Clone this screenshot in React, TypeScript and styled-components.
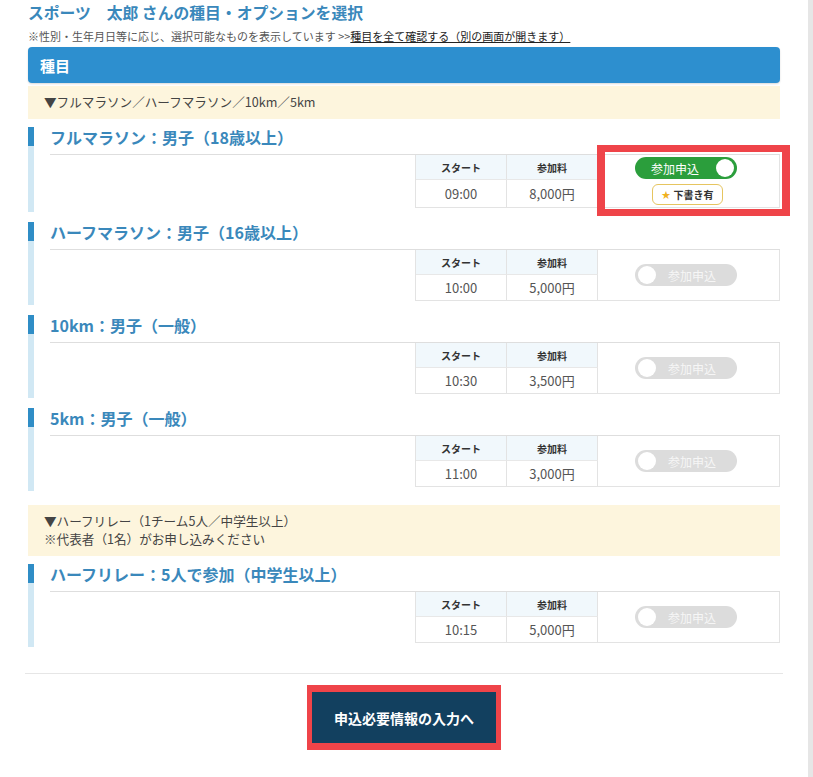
import React from 'react'
import styled, { createGlobalStyle } from 'styled-components'

const GlobalStyle = createGlobalStyle`
  * { box-sizing: border-box; }
  body {
    margin: 0;
    background: #fff;
    font-family: "Noto Sans CJK JP", "Noto Sans", sans-serif;
    color: #333;
  }
`

type Entry = {
  title: string
  start: string
  fee: string
  on?: boolean
  draft?: boolean
}

type Group = {
  band: string[]
  entries: Entry[]
}

const groups: Group[] = [
  {
    band: ['▼フルマラソン／ハーフマラソン／10km／5km'],
    entries: [
      { title: 'フルマラソン：男子（18歳以上）', start: '09:00', fee: '8,000円', on: true, draft: true },
      { title: 'ハーフマラソン：男子（16歳以上）', start: '10:00', fee: '5,000円' },
      { title: '10km：男子（一般）', start: '10:30', fee: '3,500円' },
      { title: '5km：男子（一般）', start: '11:00', fee: '3,000円' },
    ],
  },
  {
    band: ['▼ハーフリレー（1チーム5人／中学生以上）', '※代表者（1名）がお申し込みください'],
    entries: [{ title: 'ハーフリレー：5人で参加（中学生以上）', start: '10:15', fee: '5,000円' }],
  },
]

export default function App() {
  return (
    <>
      <GlobalStyle />
      <Page>
        <PageTitle>スポーツ　太郎 さんの種目・オプションを選択</PageTitle>
        <Note>
          ※性別・生年月日等に応じ、選択可能なものを表示しています &gt;&gt;
          <a href="#">種目を全て確認する（別の画面が開きます）</a>
        </Note>
        <SectionBar>種目</SectionBar>
        {groups.map((g, gi) => (
          <GroupBlock key={gi} $first={gi === 0}>
            <Band>
              {g.band.map((line) => (
                <BandLine key={line}>{line}</BandLine>
              ))}
            </Band>
            {g.entries.map((e, i) => (
              <Item key={e.title} $first={i === 0}>
                <Accent />
                <ItemBody>
                  <ItemTitle>{e.title}</ItemTitle>
                  <Table>
                    <HeadCell>スタート</HeadCell>
                    <HeadCell>参加料</HeadCell>
                    <ToggleCell>
                      <Toggle $on={!!e.on}>
                        <Knob $on={!!e.on} />
                        <span>参加申込</span>
                      </Toggle>
                      {e.draft && (
                        <Draft>
                          <Star>★</Star>下書き有
                        </Draft>
                      )}
                      {e.on && <Highlight />}
                    </ToggleCell>
                    <DataCell>{e.start}</DataCell>
                    <DataCell>{e.fee}</DataCell>
                  </Table>
                </ItemBody>
              </Item>
            ))}
          </GroupBlock>
        ))}
        <Divider />
        <Footer>
          <NextButton>申込必要情報の入力へ</NextButton>
        </Footer>
      </Page>
    </>
  )
}

const Page = styled.div`
  width: 813px;
  min-height: 100vh;
  padding: 3px 28px 0;
  border-right: 5px solid #e6e6e6;
`

const PageTitle = styled.h1`
  margin: 0;
  font-size: 15.8px;
  line-height: 20px;
  font-weight: 700;
  color: #3a88bb;
`

const Note = styled.p`
  margin: 6px 0 0;
  font-size: 11px;
  line-height: 14px;
  color: #555;
  a {
    color: #222;
    text-decoration: underline;
  }
`

const SectionBar = styled.div`
  margin-top: 4px;
  height: 36px;
  padding-left: 12px;
  display: flex;
  align-items: center;
  background: #2d8fcf;
  border-radius: 4px;
  color: #fff;
  font-size: 15px;
  font-weight: 700;
  box-shadow: 0 1px 2px rgba(0, 0, 0, 0.15);
`

const GroupBlock = styled.div<{ $first: boolean }>`
  margin-top: ${(p) => (p.$first ? '3px' : '14px')};
`

const Band = styled.div`
  padding: 7px 16px 8px;
  background: #fdf5dd;
  color: #444;
`

const BandLine = styled.div`
  height: 18px;
  font-size: 12.6px;
  line-height: 18px;
`

const Item = styled.div<{ $first: boolean }>`
  display: flex;
  gap: 16px;
  margin-top: ${(p) => (p.$first ? '8px' : '10px')};
`

const Accent = styled.div`
  width: 6px;
  flex: none;
  background: linear-gradient(#2f8dc6 0 19px, #d1e8f4 19px);
`

const ItemBody = styled.div`
  flex: 1;
  padding-bottom: 4px;
`

const ItemTitle = styled.h2`
  margin: 0;
  padding-bottom: 7px;
  font-size: 16px;
  line-height: 20px;
  font-weight: 700;
  color: #3a88bb;
  border-bottom: 1px solid #dedede;
`

const Table = styled.div`
  margin-left: auto;
  width: 365px;
  display: grid;
  grid-template-columns: 91px 91px 183px;
  grid-template-rows: 25px minmax(25px, auto);
  border-left: 1px solid #e3e3e3;
  border-right: 1px solid #e3e3e3;
  border-bottom: 1px solid #e3e3e3;
`

const HeadCell = styled.div`
  display: flex;
  align-items: center;
  justify-content: center;
  background: #f1f8fc;
  border-right: 1px solid #e3e3e3;
  border-bottom: 1px solid #e8e8e8;
  font-size: 10px;
  font-weight: 700;
  color: #333;
`

const DataCell = styled.div`
  display: flex;
  align-items: center;
  justify-content: center;
  border-right: 1px solid #e3e3e3;
  font-size: 13px;
  color: #555;
`

const ToggleCell = styled.div`
  position: relative;
  grid-column: 3;
  grid-row: 1 / span 2;
  display: flex;
  flex-direction: column;
  align-items: center;
  justify-content: center;
  gap: 5px;
  padding: 2px 0 2px;
`

const Toggle = styled.div<{ $on: boolean }>`
  position: relative;
  width: 102px;
  height: 22px;
  margin-right: 7px;
  border-radius: 11px;
  display: flex;
  align-items: center;
  justify-content: center;
  padding: ${(p) => (p.$on ? '0 22px 0 0' : '0 0 0 12px')};
  background: ${(p) => (p.$on ? '#2b9e3c' : '#dcdcdc')};
  color: ${(p) => (p.$on ? '#fff' : '#f6f6f6')};
  font-size: 12px;
`

const Knob = styled.span<{ $on: boolean }>`
  position: absolute;
  top: 2px;
  ${(p) => (p.$on ? 'right: 3px;' : 'left: 3px;')}
  width: 18px;
  height: 18px;
  border-radius: 50%;
  background: #fff;
`

const Draft = styled.div`
  display: flex;
  align-items: center;
  gap: 3px;
  height: 21px;
  padding: 0 8px;
  margin-right: 4px;
  border: 1px solid #e6c560;
  border-radius: 6px;
  background: #fff;
  font-size: 10px;
  font-weight: 700;
  color: #333;
`

const Star = styled.span`
  color: #f0b11e;
  font-size: 9px;
`

const Highlight = styled.span`
  position: absolute;
  top: -10px;
  left: -1px;
  right: -9px;
  bottom: -9px;
  border: 7px solid #ef4449;
  border-left-width: 8px;
  border-right-width: 8px;
  pointer-events: none;
`

const Divider = styled.hr`
  margin: 26px -3px 0;
  border: 0;
  border-top: 1px solid #e6e6e6;
`

const Footer = styled.div`
  display: flex;
  justify-content: center;
  padding-top: 18px;
`

const NextButton = styled.button`
  width: 184px;
  height: 51px;
  border: 0;
  background: #12405f;
  color: #fff;
  font-family: inherit;
  font-size: 14px;
  font-weight: 700;
  box-shadow: 0 0 0 5px #ef4449, 0 -2px 0 5px #ef4449, 0 2px 0 5px #ef4449;
`
